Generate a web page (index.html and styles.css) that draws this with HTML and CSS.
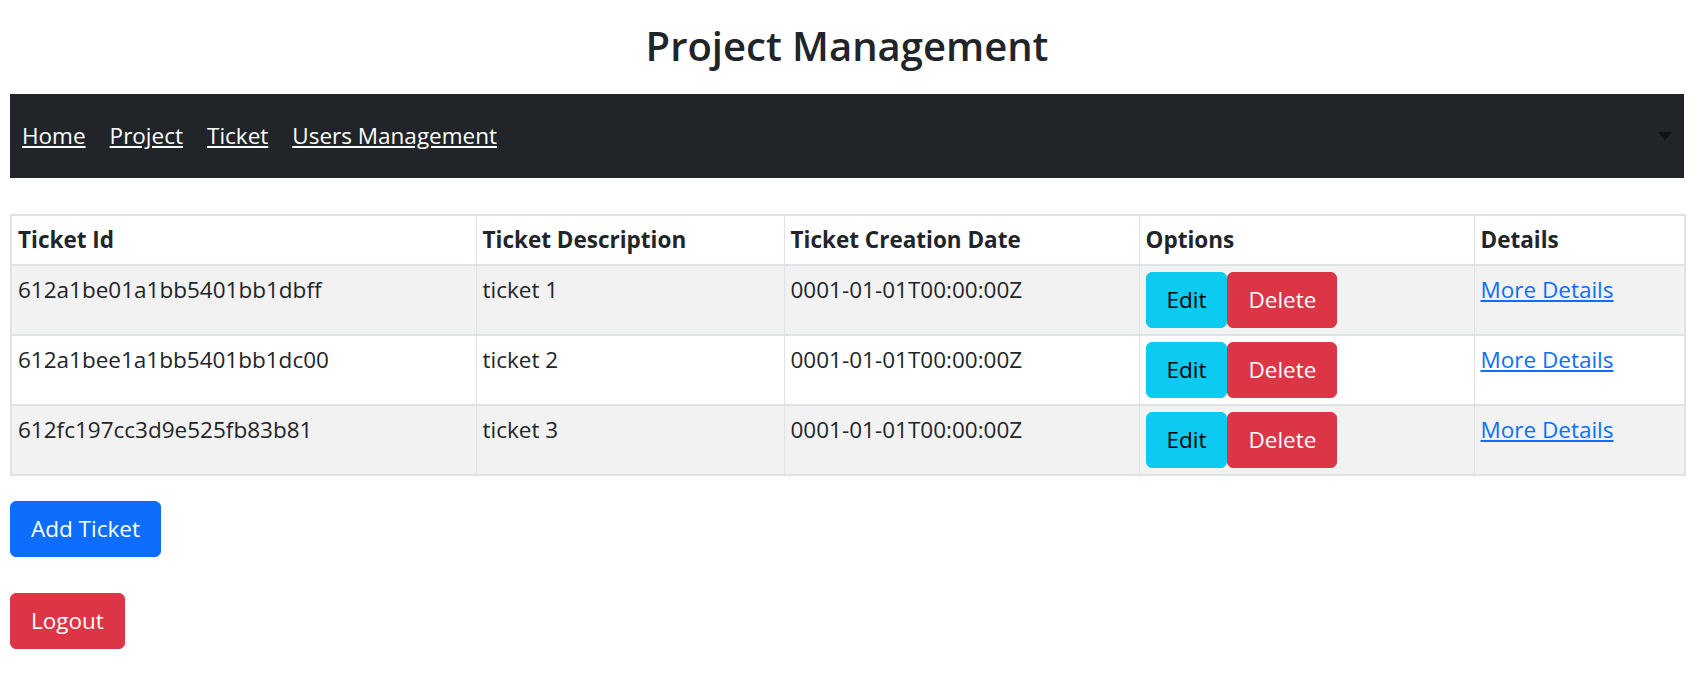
FILE: index.html
```html
<!DOCTYPE html>
<html lang="en">
<head>
    <meta charset="UTF-8">
    <meta name="viewport" content="width=device-width, initial-scale=1.0">
    <title>Project Management</title>
    <link rel="stylesheet" href="styles.css">
</head>
<body>
    <div class="page">
        <h1 class="page-title">Project Management</h1>

        <nav class="navbar">
            <a href="#">Home</a>
            <a href="#">Project</a>
            <a href="#">Ticket</a>
            <a href="#">Users Management</a>
            <span class="caret"></span>
        </nav>

        <table class="tickets">
            <colgroup>
                <col class="col-id">
                <col class="col-desc">
                <col class="col-date">
                <col class="col-options">
                <col class="col-details">
            </colgroup>
            <thead>
                <tr>
                    <th>Ticket Id</th>
                    <th>Ticket Description</th>
                    <th>Ticket Creation Date</th>
                    <th>Options</th>
                    <th>Details</th>
                </tr>
            </thead>
            <tbody>
                <tr class="striped">
                    <td>612a1be01a1bb5401bb1dbff</td>
                    <td>ticket 1</td>
                    <td>0001-01-01T00:00:00Z</td>
                    <td><button class="btn btn-info">Edit</button><button class="btn btn-danger">Delete</button></td>
                    <td><a href="#">More Details</a></td>
                </tr>
                <tr>
                    <td>612a1bee1a1bb5401bb1dc00</td>
                    <td>ticket 2</td>
                    <td>0001-01-01T00:00:00Z</td>
                    <td><button class="btn btn-info">Edit</button><button class="btn btn-danger">Delete</button></td>
                    <td><a href="#">More Details</a></td>
                </tr>
                <tr class="striped">
                    <td>612fc197cc3d9e525fb83b81</td>
                    <td>ticket 3</td>
                    <td>0001-01-01T00:00:00Z</td>
                    <td><button class="btn btn-info">Edit</button><button class="btn btn-danger">Delete</button></td>
                    <td><a href="#">More Details</a></td>
                </tr>
            </tbody>
        </table>

        <div class="actions add">
            <button class="btn btn-primary">Add Ticket</button>
        </div>
        <div class="actions logout">
            <button class="btn btn-danger">Logout</button>
        </div>
    </div>
</body>
</html>
```

FILE: styles.css
```css
* {
    box-sizing: border-box;
    margin: 0;
    padding: 0;
}

body {
    font-family: "Open Sans", sans-serif;
    font-size: 22.5px;
    line-height: 36px;
    color: #212529;
    background-color: #fff;
}

.page {
    padding: 0 19px 0 10px;
}

.page-title {
    font-size: 40px;
    font-weight: 600;
    line-height: 48px;
    text-align: center;
    margin: 22px 0 24px;
}

.navbar {
    display: flex;
    align-items: center;
    height: 84px;
    background-color: #212529;
}

.navbar a {
    color: #fff;
    padding: 0 12px;
}

.caret {
    margin-left: auto;
    margin-right: 12px;
    width: 0;
    height: 0;
    border-top: 8px solid #111;
    border-left: 7px solid transparent;
    border-right: 7px solid transparent;
}

.tickets {
    width: 100%;
    margin-top: 36px;
    border-collapse: collapse;
    table-layout: fixed;
    border: 2px solid #dee2e6;
}

.col-id { width: 465px; }
.col-desc { width: 308px; }
.col-date { width: 355px; }
.col-options { width: 335px; }
.col-details { width: 211px; }

.tickets tr {
    border-bottom: 2px solid #dee2e6;
}

.tickets th,
.tickets td {
    text-align: left;
    vertical-align: top;
    padding: 6px;
    border-left: 1px solid #dee2e6;
    border-right: 1px solid #dee2e6;
    white-space: nowrap;
}

.tickets th {
    font-weight: 700;
}

.tickets tr.striped td {
    background-color: #f2f2f2;
}

.tickets a {
    color: #0d6efd;
}

.btn {
    display: inline-block;
    font-family: inherit;
    font-size: 22.5px;
    line-height: 36px;
    padding: 9px 20px;
    border: 1px solid transparent;
    border-radius: 6px;
    cursor: pointer;
    vertical-align: top;
}

.btn-info {
    background-color: #0dcaf0;
    border-color: #0dcaf0;
    color: #000;
}

.btn-danger {
    background-color: #dc3545;
    border-color: #dc3545;
    color: #fff;
}

.btn-primary {
    background-color: #0d6efd;
    border-color: #0d6efd;
    color: #fff;
}

.actions.add {
    margin-top: 25px;
}

.actions.logout {
    margin-top: 36px;
}
```
